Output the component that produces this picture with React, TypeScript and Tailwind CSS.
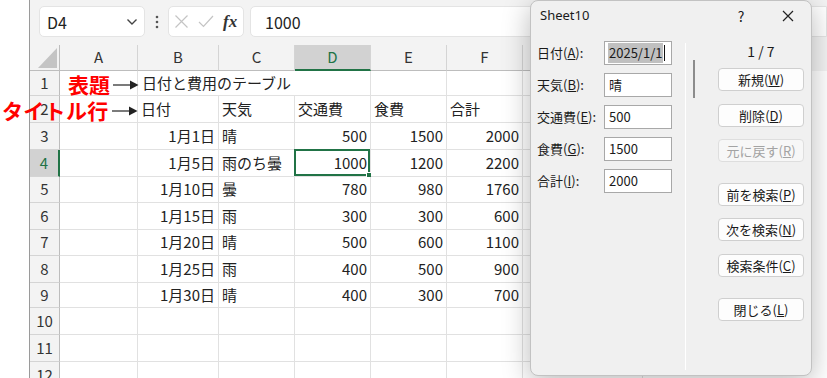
import React from "react";

const COLS = [
  { id: "A", w: "w-[78px]" },
  { id: "B", w: "w-[81px]" },
  { id: "C", w: "w-[76px]" },
  { id: "D", w: "w-[76px]" },
  { id: "E", w: "w-[76px]" },
  { id: "F", w: "w-[76px]" },
  { id: "G", w: "w-[120px]" },
];

const ROW_H = [
  "h-[25px]",
  "h-[27px]",
  "h-[27px]",
  "h-[27px]",
  "h-[26px]",
  "h-[27px]",
  "h-[26px]",
  "h-[27px]",
  "h-[25px]",
  "h-[27px]",
  "h-[27px]",
  "h-[27px]",
];

// rows 2..9, columns A..F
const DATA: string[][] = [
  ["", "日付", "天気", "交通費", "食費", "合計"],
  ["", "1月1日", "晴", "500", "1500", "2000"],
  ["", "1月5日", "雨のち曇", "1000", "1200", "2200"],
  ["", "1月10日", "曇", "780", "980", "1760"],
  ["", "1月15日", "雨", "300", "300", "600"],
  ["", "1月20日", "晴", "500", "600", "1100"],
  ["", "1月25日", "雨", "400", "500", "900"],
  ["", "1月30日", "晴", "400", "300", "700"],
];

export default function App() {
  return (
    <div className="relative flex h-[378px] w-[827px] overflow-hidden bg-white font-['Noto_Sans_CJK_JP','Noto_Sans',sans-serif] text-[#222]">
      <div className="w-[30px] shrink-0 border-r border-[#9a9a9a] bg-white" />
      <div className="flex min-w-0 flex-1 flex-col">
        <FormulaBar />
        <Grid />
      </div>
      <Annotations />
      <RecordDialog />
    </div>
  );
}

function FormulaBar() {
  return (
    <div className="flex h-[45px] shrink-0 items-start bg-[#f3f3f3] pl-[9px] pt-[6px]">
      <div className="flex h-[31px] w-[106px] shrink-0 items-center justify-between rounded-[5px] border border-[#e4e4e4] bg-white pl-[7px] pr-[6px]">
        <span className="text-[16px] leading-none text-[#222]">D4</span>
        <svg width="12" height="8" viewBox="0 0 12 8">
          <polyline points="1.5,1.5 6,6 10.5,1.5" fill="none" stroke="#444" strokeWidth="1.4" />
        </svg>
      </div>
      <div className="flex h-[31px] w-[23px] shrink-0 items-center justify-center">
        <svg width="4" height="14" viewBox="0 0 4 14">
          <circle cx="2" cy="2" r="1.3" fill="#555" />
          <circle cx="2" cy="7" r="1.3" fill="#555" />
          <circle cx="2" cy="12" r="1.3" fill="#555" />
        </svg>
      </div>
      <div className="flex h-[31px] w-[76px] shrink-0 items-center rounded-[5px] border border-[#e4e4e4] bg-white pl-[5px]">
        <svg width="15" height="15" viewBox="0 0 15 15">
          <path d="M1.5 1.5 L13.5 13.5 M13.5 1.5 L1.5 13.5" stroke="#c4c4c4" strokeWidth="1.2" fill="none" />
        </svg>
        <svg width="16" height="15" viewBox="0 0 16 15" className="ml-[9px]">
          <polyline points="1,8 5.5,12.5 15,2" stroke="#c4c4c4" strokeWidth="1.2" fill="none" />
        </svg>
        <span className="ml-[9px] font-['Liberation_Serif',serif] text-[17px] font-bold italic leading-none text-[#333]">
          fx
        </span>
      </div>
      <div className="ml-[6px] flex h-[31px] flex-1 items-center rounded-l-[5px] border border-[#e4e4e4] bg-white pl-[14px]">
        <span className="text-[16px] leading-none text-[#222]">1000</span>
      </div>
    </div>
  );
}

function Grid() {
  return (
    <div className="flex flex-col text-[15px]">
      <div className="flex h-[26px] shrink-0 bg-[#f3f3f3] text-[15px] text-[#333]">
        <div className="relative w-[30px] shrink-0 border-b border-r border-[#bdbdbd]">
          <svg width="30" height="26" viewBox="0 0 30 26" className="absolute left-0 top-0">
            <polygon points="27,3 27,23 8,23" fill="#c4c4c4" />
          </svg>
        </div>
        {COLS.map((col) => (
          <div
            key={col.id}
            className={`${col.w} flex shrink-0 items-center justify-center border-r border-r-[#d4d4d4] ${
              col.id === "D"
                ? "border-b-2 border-b-[#217346] bg-[#d2d2d2] text-[#217346]"
                : "border-b border-b-[#bdbdbd]"
            }`}
          >
            {col.id}
          </div>
        ))}
      </div>
      {ROW_H.map((h, i) => {
        const n = i + 1;
        return (
          <div key={n} className={`flex ${h} shrink-0`}>
            <div
              className={`flex w-[30px] shrink-0 items-center justify-center border-b border-b-[#d4d4d4] ${
                n === 4
                  ? "border-r-2 border-r-[#217346] bg-[#d2d2d2] text-[#217346]"
                  : "border-r border-r-[#bdbdbd] bg-[#f3f3f3] text-[#333]"
              }`}
            >
              {n}
            </div>
            {n === 1 ? <TitleRow /> : <DataRow n={n} />}
          </div>
        );
      })}
    </div>
  );
}

function TitleRow() {
  return (
    <>
      <div className="w-[78px] shrink-0 border-b border-r border-[#e1e1e1]" />
      <div className="flex w-[233px] shrink-0 items-center whitespace-nowrap border-b border-r border-[#e1e1e1] pl-[4px]">
        日付と費用のテーブル
      </div>
      <div className="w-[76px] shrink-0 border-b border-r border-[#e1e1e1]" />
      <div className="w-[76px] shrink-0 border-b border-r border-[#e1e1e1]" />
      <div className="w-[120px] shrink-0 border-b border-r border-[#e1e1e1]" />
    </>
  );
}

function DataRow({ n }: { n: number }) {
  const values = DATA[n - 2] ?? [];
  return (
    <>
      {COLS.map((col, ci) => {
        const text = values[ci] ?? "";
        const right = n > 2 && (ci === 1 || ci >= 3);
        const selected = n === 4 && col.id === "D";
        return (
          <div
            key={col.id}
            className={`${col.w} relative flex shrink-0 items-center whitespace-nowrap border-b border-r border-[#e1e1e1] px-[3px] ${
              right ? "justify-end" : "justify-start"
            }`}
          >
            {text}
            {selected && (
              <div className="absolute left-[-1px] top-[-1px] h-[calc(100%+1px)] w-[calc(100%+1px)] border-2 border-[#217346]">
                <div className="absolute bottom-[-4px] right-[-4px] h-[6px] w-[6px] border border-white bg-[#217346]" />
              </div>
            )}
          </div>
        );
      })}
    </>
  );
}

function Arrow() {
  return (
    <svg width="26" height="12" viewBox="0 0 26 12">
      <line x1="0" y1="6" x2="18" y2="6" stroke="#222" strokeWidth="1.2" />
      <polygon points="17,1.5 25.5,6 17,10.5" fill="#222" />
    </svg>
  );
}

function Annotations() {
  return (
    <>
      <div className="absolute left-[68px] top-[72px] flex items-center">
        <span className="text-[21px] font-bold leading-[24px] text-[#ff0000]">表題</span>
        <span className="ml-[3px] mt-[1px]">
          <Arrow />
        </span>
      </div>
      <div className="absolute left-[2px] top-[98px] flex items-center">
        <span className="text-[21px] font-bold leading-[24px] tracking-[0.3px] text-[#ff0000]">タイトル行</span>
        <span className="ml-[3px] mt-[1px]">
          <Arrow />
        </span>
      </div>
    </>
  );
}

function Field({ label, hot, value, selected }: { label: string; hot: string; value: string; selected?: boolean }) {
  return (
    <div className="flex h-[24px] items-center">
      <span className="w-[67px] shrink-0 text-[13px] text-[#1a1a1a]">
        {label}(<span className="underline">{hot}</span>):
      </span>
      <div className="flex h-[24px] w-[68px] shrink-0 items-center border border-[#a8a8a8] bg-white pl-[3px] text-[13px] text-[#1a1a1a]">
        {selected ? (
          <>
            <span className="bg-[#c0c0c0] px-[1px]">{value}</span>
            <span className="ml-px h-[16px] w-px bg-[#111]" />
          </>
        ) : (
          <span className="pl-px">{value}</span>
        )}
      </div>
    </div>
  );
}

function DialogButton({ label, hot, disabled, className }: { label: string; hot: string; disabled?: boolean; className: string }) {
  return (
    <div
      className={`flex h-[23px] w-[86px] items-center justify-center rounded-[4px] border text-[13px] ${
        disabled ? "border-[#dedede] bg-[#f7f7f7] text-[#a3a3a3]" : "border-[#cfcfcf] bg-[#fdfdfd] text-[#1a1a1a]"
      } ${className}`}
    >
      {label}(<span className="underline">{hot}</span>)
    </div>
  );
}

function RecordDialog() {
  return (
    <div className="absolute left-[530px] top-0 flex h-[376px] w-[282px] flex-col rounded-[8px] border border-[#c2c2c2] bg-[#f0f0f0] shadow-[0_6px_28px_rgba(0,0,0,0.28)]">
      <div className="flex h-[30px] shrink-0 items-center pl-[9px] pr-[17px] text-[13px] text-[#1a1a1a]">
        <span className="font-['Noto_Sans',sans-serif]">Sheet10</span>
        <span className="flex-1" />
        <span className="w-[12px] text-center text-[14px]">?</span>
        <svg width="12" height="12" viewBox="0 0 12 12" className="ml-[35px]">
          <path d="M1 1 L11 11 M11 1 L1 11" stroke="#222" strokeWidth="1.2" fill="none" />
        </svg>
      </div>
      <div className="flex flex-1">
        <div className="flex w-[154px] shrink-0 flex-col gap-[8px] pl-[6px] pt-[10px]">
          <Field label="日付" hot="A" value="2025/1/1" selected />
          <Field label="天気" hot="B" value="晴" />
          <Field label="交通費" hot="E" value="500" />
          <Field label="食費" hot="G" value="1500" />
          <Field label="合計" hot="I" value="2000" />
        </div>
        <div className="mb-[5px] mt-[12px] w-px bg-white" />
        <div className="ml-[7px] mt-[29px] h-[38px] w-[2px] bg-[#8c8c8c]" />
        <div className="ml-[23px] flex w-[86px] flex-col pt-[10px]">
          <div className="flex h-[20px] items-center justify-center text-[14px] text-[#1a1a1a]">1 / 7</div>
          <DialogButton label="新規" hot="W" className="mt-[7px]" />
          <DialogButton label="削除" hot="D" className="mt-[13px]" />
          <DialogButton label="元に戻す" hot="R" disabled className="mt-[12px]" />
          <DialogButton label="前を検索" hot="P" className="mt-[21px]" />
          <DialogButton label="次を検索" hot="N" className="mt-[12px]" />
          <DialogButton label="検索条件" hot="C" className="mt-[13px]" />
          <DialogButton label="閉じる" hot="L" className="mt-[21px]" />
        </div>
      </div>
    </div>
  );
}
